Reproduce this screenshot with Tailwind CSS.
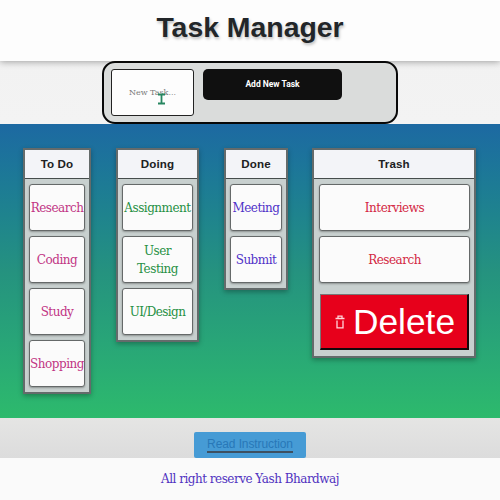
<!DOCTYPE html>
<html lang="en"><head><meta charset="utf-8"><title>Task Manager</title>
<script src="https://cdn.jsdelivr.net/npm/@tailwindcss/browser@4"></script></head>
<body class="w-[500px] h-[500px] overflow-hidden flex flex-col bg-[#f2f2f2] font-['Roboto_Slab','DejaVu_Serif',serif]">
<header class="relative h-[61px] shrink-0 bg-[#fdfdfd] shadow-[0_1px_7px_rgba(0,0,0,0.35)] flex justify-center pt-[9px]">
<h1 class="font-['Liberation_Sans',sans-serif] font-bold text-[28.4px] leading-[36px] text-[#222629] whitespace-nowrap [text-shadow:1px_2px_3px_rgba(0,0,0,0.25)]">Task Manager</h1>
</header>
<section class="relative h-[63px] shrink-0 flex justify-center bg-linear-to-b from-[#efefef]/0 to-[#f3f3f3]">
<form class="w-[296px] h-[63px] border-2 border-[#080808] rounded-[13px] bg-[#dadcdb] flex items-start pt-[6px] pl-[7px] gap-[9px]">
<div class="relative w-[83px] h-[47px] border border-[#222] rounded-[3px] bg-[#fdfdfd] flex items-center justify-center text-[8px] text-[#777]">New Task...
<svg class="absolute left-[45px] top-[23px]" width="9" height="12" viewBox="0 0 9 12" fill="none" stroke="#278660" stroke-width="1.8"><path d="M1 1.5H8M4.5 1.5V10.5M1 10.5H8"/></svg></div>
<button type="button" class="w-[139px] h-[31px] rounded-[5px] bg-[#101010] text-white font-[Roboto,sans-serif] font-bold text-[8.5px]">Add New Task</button>
</form></section>
<main class="h-[294px] shrink-0 bg-linear-to-b from-[#1d69a2] via-[#25927f] to-[#2dba6c] flex items-start pt-[24px] pl-[23px] gap-[25px] text-[12px] tracking-[-.5px] leading-[18px] text-center">
<section class="w-[68px] border-2 border-[#646b6b] bg-[#c8d0cf] shadow-[0_2px_5px_rgba(0,0,0,0.3)]">
<h2 class="h-[29px] bg-[#f3f4f8] border-b border-[#454c4c] font-['Liberation_Sans',sans-serif] font-bold text-[11.6px] tracking-[.1px] leading-[28px] text-[#202122]">To Do</h2>
<div class="p-[4px] pt-[5px] pb-[5px] flex flex-col gap-[5px] text-[#c13584]">
<div class="h-[47px] rounded-[3px] border border-[#656969] bg-[#fbfbfb] flex items-center justify-center shadow-[0_1px_2px_rgba(0,0,0,.3)]">Research</div>
<div class="h-[47px] rounded-[3px] border border-[#656969] bg-[#fbfbfb] flex items-center justify-center shadow-[0_1px_2px_rgba(0,0,0,.3)]">Coding</div>
<div class="h-[47px] rounded-[3px] border border-[#656969] bg-[#fbfbfb] flex items-center justify-center shadow-[0_1px_2px_rgba(0,0,0,.3)]">Study</div>
<div class="h-[47px] rounded-[3px] border border-[#656969] bg-[#fbfbfb] flex items-center justify-center shadow-[0_1px_2px_rgba(0,0,0,.3)]">Shopping</div>
</div></section>
<section class="w-[83px] border-2 border-[#646b6b] bg-[#c8d0cf] shadow-[0_2px_5px_rgba(0,0,0,0.3)]">
<h2 class="h-[29px] bg-[#f3f4f8] border-b border-[#454c4c] font-['Liberation_Sans',sans-serif] font-bold text-[11.6px] tracking-[.1px] leading-[28px] text-[#202122]">Doing</h2>
<div class="p-[4px] pt-[5px] pb-[5px] flex flex-col gap-[5px] text-[#269044]">
<div class="h-[47px] rounded-[3px] border border-[#656969] bg-[#fbfbfb] flex items-center justify-center shadow-[0_1px_2px_rgba(0,0,0,.3)]">Assignment</div>
<div class="h-[47px] rounded-[3px] border border-[#656969] bg-[#fbfbfb] flex items-center justify-center shadow-[0_1px_2px_rgba(0,0,0,.3)]">User<br>Testing</div>
<div class="h-[47px] rounded-[3px] border border-[#656969] bg-[#fbfbfb] flex items-center justify-center shadow-[0_1px_2px_rgba(0,0,0,.3)]"><span class="tracking-[-.6px]">UI/Design</span></div>
</div></section>
<section class="w-[64px] border-2 border-[#646b6b] bg-[#c8d0cf] shadow-[0_2px_5px_rgba(0,0,0,0.3)]">
<h2 class="h-[29px] bg-[#f3f4f8] border-b border-[#454c4c] font-['Liberation_Sans',sans-serif] font-bold text-[11.6px] tracking-[.1px] leading-[28px] text-[#202122]">Done</h2>
<div class="p-[4px] pt-[5px] pb-[5px] flex flex-col gap-[5px] text-[#5032c8]">
<div class="h-[47px] rounded-[3px] border border-[#656969] bg-[#fbfbfb] flex items-center justify-center shadow-[0_1px_2px_rgba(0,0,0,.3)]">Meeting</div>
<div class="h-[47px] rounded-[3px] border border-[#656969] bg-[#fbfbfb] flex items-center justify-center shadow-[0_1px_2px_rgba(0,0,0,.3)]">Submit</div>
</div></section>
<section class="w-[164px] h-[210px] -ml-px border-2 border-[#646b6b] bg-[#c8d0cf] shadow-[0_2px_5px_rgba(0,0,0,0.3)]">
<h2 class="h-[29px] bg-[#f3f4f8] border-b border-[#454c4c] font-['Liberation_Sans',sans-serif] font-bold text-[11.6px] tracking-[.1px] leading-[28px] text-[#202122]">Trash</h2>
<div class="p-[4px] pt-[5px] pl-[5px] flex flex-col gap-[5px] text-[#d32743]">
<div class="h-[47px] rounded-[3px] border border-[#656969] bg-[#fbfbfb] flex items-center justify-center shadow-[0_1px_2px_rgba(0,0,0,.3)]">Interviews</div>
<div class="h-[47px] rounded-[3px] border border-[#656969] bg-[#fbfbfb] flex items-center justify-center shadow-[0_1px_2px_rgba(0,0,0,.3)]">Research</div>
<button type="button" class="mt-[6px] mx-px h-[56px] bg-[#e7001b] border-t border-l border-t-[#777] border-l-[#777] border-r-2 border-b-2 border-r-[#15070a] border-b-[#15070a] flex items-center pl-[14px] gap-[8px] text-white font-['Liberation_Sans',sans-serif] text-[35.3px] tracking-normal leading-[40px]">
<svg width="10" height="14" viewBox="0 0 10 14" fill="none" stroke="#ffd5da" stroke-width="1.3"><path d="M.5 3.5H9.5M3 3V1.2H7V3M2 5.5V12.8H8V5.5"/></svg><span>Delete</span></button>
</div></section>
</main>
<section class="h-[40px] shrink-0 bg-linear-to-b from-[#e5e5e4] to-[#dcdcdc] flex items-end justify-center">
<button type="button" class="w-[112px] h-[26px] rounded-[2px] bg-[#469bd5] flex justify-center items-start pt-[4px] font-['Liberation_Sans',sans-serif] text-[12px] tracking-[-.1px] leading-[17px] text-[#2878b8]"><span class="border-b-2 border-[#3d5061] h-[17px] whitespace-nowrap">Read Instruction</span></button>
</section>
<footer class="h-[42px] shrink-0 bg-[#fafafa] text-center text-[12px] tracking-[-.5px] leading-[43px] text-[#5032c0] whitespace-nowrap">All right reserve Yash Bhardwaj</footer>
</body></html>
